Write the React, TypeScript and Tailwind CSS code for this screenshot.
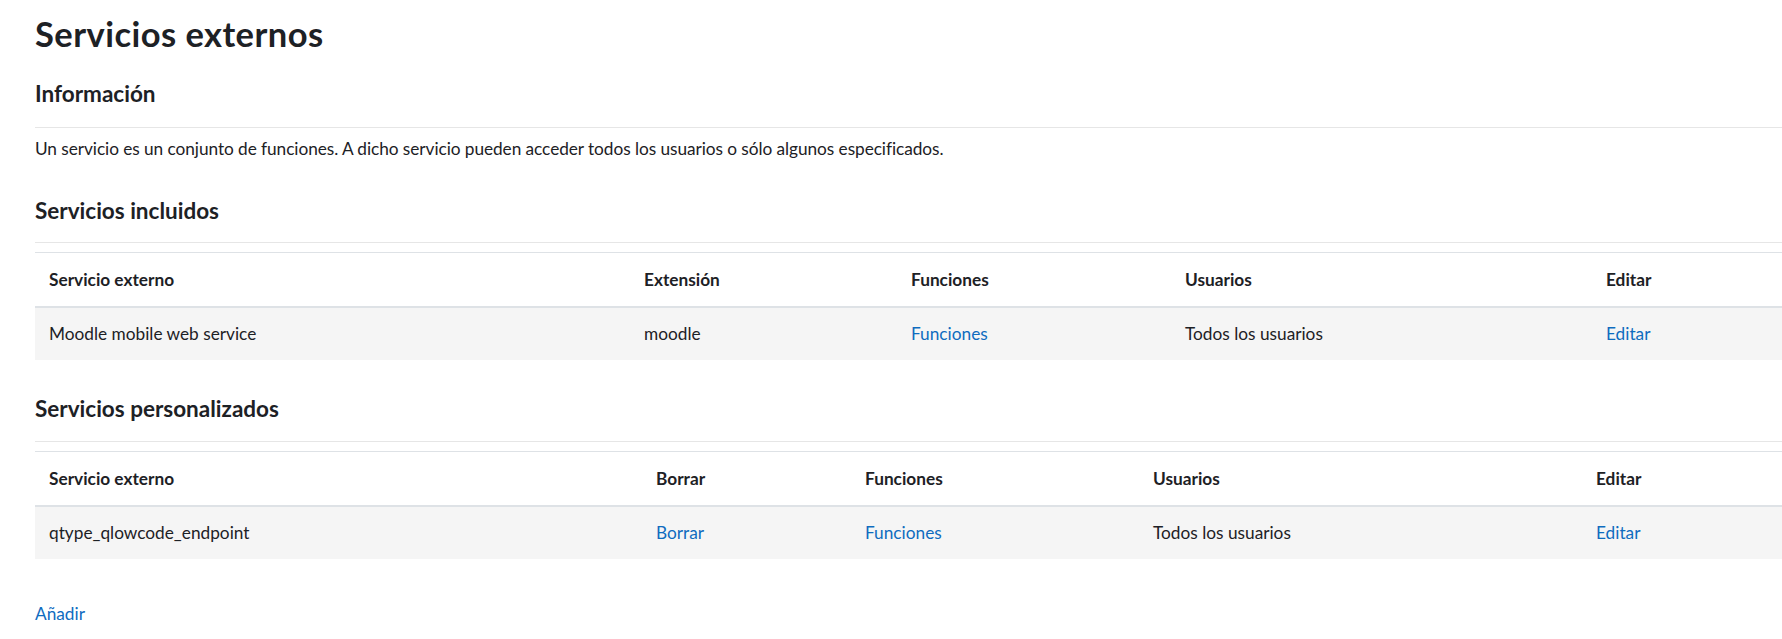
import React from 'react';

const font = { fontFamily: 'Lato, "Noto Sans", "Open Sans", sans-serif' };

const Link = ({ children }: { children: React.ReactNode }) => (
  <a href="#" className="text-[#0f6cbf] no-underline hover:underline">
    {children}
  </a>
);

type Table = {
  heads: string[];
  widths: string[];
  row: React.ReactNode[];
};

const ServiceTable = ({ heads, widths, row }: Table) => (
  <table className="w-full table-fixed border-collapse border-t border-[#dee2e6] text-left">
    <colgroup>
      {widths.map((w, i) => (
        <col key={i} className={w} />
      ))}
    </colgroup>
    <thead>
      <tr className="border-b-2 border-[#dee2e6]">
        {heads.map((h) => (
          <th key={h} className="px-[14px] py-[14px] leading-[25px] font-bold">
            {h}
          </th>
        ))}
      </tr>
    </thead>
    <tbody>
      <tr className="bg-[#f5f5f5]">
        {row.map((c, i) => (
          <td key={i} className="px-[14px] py-[13px] leading-[26px]">
            {c}
          </td>
        ))}
      </tr>
    </tbody>
  </table>
);

export default function App() {
  return (
    <div style={font} className="bg-white text-[#1d2125] text-[17.25px]">
      <div className="pl-[35px] pt-[13px] pb-[8px]">
        <h2 className="text-[34.5px] leading-[41px] font-bold tracking-[0.45px]">Servicios externos</h2>

        {/* Información */}
        <h3 className="mt-[26px] text-[22.5px] leading-[27.6px] font-bold">Información</h3>
        <hr className="mt-[19px] border-t border-[#e6e6e6]" />
        <p className="mt-[8px] leading-[26px] tracking-[-0.06px]">
          Un servicio es un conjunto de funciones. A dicho servicio pueden acceder todos los usuarios o sólo algunos especificados.
        </p>

        {/* Servicios incluidos */}
        <h3 className="mt-[35px] text-[22.5px] leading-[27.6px] font-bold">Servicios incluidos</h3>
        <hr className="mt-[18px] mb-[9px] border-t border-[#e6e6e6]" />
        <ServiceTable
          heads={['Servicio externo', 'Extensión', 'Funciones', 'Usuarios', 'Editar']}
          widths={['w-[595px]', 'w-[267px]', 'w-[274px]', 'w-[421px]', '']}
          row={[
            'Moodle mobile web service',
            'moodle',
            <Link>Funciones</Link>,
            'Todos los usuarios',
            <Link>Editar</Link>,
          ]}
        />

        {/* Servicios personalizados */}
        <h3 className="mt-[35px] text-[22.5px] leading-[27.6px] font-bold">Servicios personalizados</h3>
        <hr className="mt-[18px] mb-[9px] border-t border-[#e6e6e6]" />
        <ServiceTable
          heads={['Servicio externo', 'Borrar', 'Funciones', 'Usuarios', 'Editar']}
          widths={['w-[607px]', 'w-[209px]', 'w-[288px]', 'w-[443px]', '']}
          row={[
            'qtype_qlowcode_endpoint',
            <Link>Borrar</Link>,
            <Link>Funciones</Link>,
            'Todos los usuarios',
            <Link>Editar</Link>,
          ]}
        />

        <div className="mt-[42px] leading-[26px]">
          <Link>Añadir</Link>
        </div>
      </div>
    </div>
  );
}
